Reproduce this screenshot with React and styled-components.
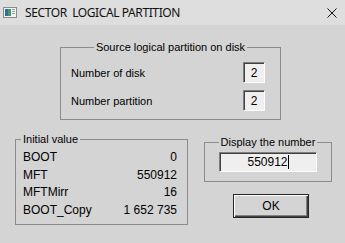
import React from "react";
import styled, { createGlobalStyle } from "styled-components";

const GlobalStyle = createGlobalStyle`
  html, body {
    margin: 0;
    padding: 0;
    background: #d4d4d4;
  }
  body {
    font-family: "Liberation Sans", Arial, sans-serif;
    font-size: 11px;
    color: #000;
  }
`;

const Window = styled.div`
  width: 345px;
  height: 243px;
  display: flex;
  flex-direction: column;
  background: #d4d4d4;
  overflow: hidden;
`;

const TitleBar = styled.div`
  height: 25px;
  flex: none;
  display: flex;
  align-items: center;
  background: #dedede;
  padding-left: 3px;
`;

const TitleText = styled.span`
  margin-left: 8px;
  font-family: "Noto Sans", "Liberation Sans", sans-serif;
  font-size: 12px;
  letter-spacing: -0.4px;
  color: #111;
`;

const Close = styled.div`
  margin-left: auto;
  margin-right: 8px;
  width: 10px;
  height: 10px;
  display: flex;
`;

const Body = styled.div`
  display: flex;
  flex-direction: column;
  padding-top: 16px;
`;

const TopRow = styled.div`
  padding-left: 60px;
`;

const Group = styled.fieldset`
  margin: 0;
  padding: 0;
  min-width: 0;
  box-sizing: border-box;
  border: 1px solid #8c8c8c;
  width: ${(p) => p.$w}px;
`;

const Legend = styled.legend`
  padding: 0 2px;
  line-height: 13px;
  margin: ${(p) => (p.$center ? "0 auto" : `0 0 0 ${p.$left || 0}px`)};
`;

const SourceInner = styled.div`
  display: grid;
  gap: 7px;
  padding: 8px 15px 8px 10px;
`;

const FieldRow = styled.div`
  display: flex;
  align-items: center;
  justify-content: space-between;
  height: 21px;
`;

const Sunken = styled.div`
  box-sizing: border-box;
  width: ${(p) => p.$w}px;
  height: ${(p) => p.$h}px;
  background: #efefef;
  border-top: 1px solid #808080;
  border-left: 1px solid #808080;
  border-right: 1px solid #ffffff;
  border-bottom: 1px solid #ffffff;
  box-shadow: inset 1px 1px 0 #404040;
  display: flex;
  align-items: center;
  justify-content: center;
  font-size: 12px;
  line-height: 1;
`;

const BottomRow = styled.div`
  display: flex;
  align-items: flex-start;
  margin-top: 13px;
  padding-left: 15px;
`;

const ValuesInner = styled.div`
  padding: 3px 10px 5px 7px;
`;

const ValueRow = styled.div`
  display: flex;
  justify-content: space-between;
  height: 17.5px;
  line-height: 17.5px;
  font-size: 12px;
`;

const RightColumn = styled.div`
  display: flex;
  flex-direction: column;
  margin-left: 16px;
  margin-top: 3px;
  width: 128px;
`;

const DisplayInner = styled.div`
  padding: 3px 0 9px 14px;
`;

const Caret = styled.span`
  display: inline-block;
  width: 1px;
  height: 14px;
  background: #000;
`;

const OkButton = styled.button`
  margin: 12px 0 0 29px;
  width: 76px;
  height: 24px;
  box-sizing: border-box;
  background: #d4d4d4;
  border: 1px solid #262626;
  box-shadow: inset 1px 1px 0 #ffffff, inset -1px -1px 0 #404040,
    inset -2px -2px 0 #808080;
  font-family: "Liberation Sans", Arial, sans-serif;
  font-size: 12px;
  color: #000;
  padding: 0;
`;

const AppIcon = () => (
  <svg width="14" height="11" viewBox="0 0 14 11">
    <rect x="0.5" y="0.5" width="13" height="10" fill="#f2f2f2" stroke="#8a8a8a" />
    <rect x="2" y="2" width="3" height="7" fill="#2f6f9f" />
    <rect x="5" y="2" width="3" height="7" fill="#3f9a6a" />
    <rect x="9" y="2" width="3" height="1" fill="#9a9a9a" />
    <rect x="9" y="4" width="3" height="1" fill="#9a9a9a" />
    <rect x="9" y="6" width="3" height="1" fill="#9a9a9a" />
  </svg>
);

const values = [
  ["BOOT", "0"],
  ["MFT", "550912"],
  ["MFTMirr", "16"],
  ["BOOT_Copy", "1 652 735"],
];

export default function App() {
  return (
    <>
      <GlobalStyle />
      <Window>
        <TitleBar>
          <AppIcon />
          <TitleText>SECTOR&nbsp; LOGICAL PARTITION</TitleText>
          <Close>
            <svg width="10" height="10" viewBox="0 0 10 10">
              <path d="M0.5 0.5 L9.5 9.5 M9.5 0.5 L0.5 9.5" stroke="#111" strokeWidth="1" />
            </svg>
          </Close>
        </TitleBar>
        <Body>
          <TopRow>
            <Group $w={221}>
              <Legend $center>Source logical partition on disk</Legend>
              <SourceInner>
                <FieldRow>
                  <span>Number of disk</span>
                  <Sunken $w={22} $h={21}>2</Sunken>
                </FieldRow>
                <FieldRow>
                  <span>Number partition</span>
                  <Sunken $w={22} $h={21}>2</Sunken>
                </FieldRow>
              </SourceInner>
            </Group>
          </TopRow>
          <BottomRow>
            <Group $w={173}>
              <Legend $left={5}>Initial value</Legend>
              <ValuesInner>
                {values.map(([k, v]) => (
                  <ValueRow key={k}>
                    <span>{k}</span>
                    <span>{v}</span>
                  </ValueRow>
                ))}
              </ValuesInner>
            </Group>
            <RightColumn>
              <Group $w={128}>
                <Legend $center>Display the number</Legend>
                <DisplayInner>
                  <Sunken $w={98} $h={20}>
                    550912
                    <Caret />
                  </Sunken>
                </DisplayInner>
              </Group>
              <OkButton>OK</OkButton>
            </RightColumn>
          </BottomRow>
        </Body>
      </Window>
    </>
  );
}
